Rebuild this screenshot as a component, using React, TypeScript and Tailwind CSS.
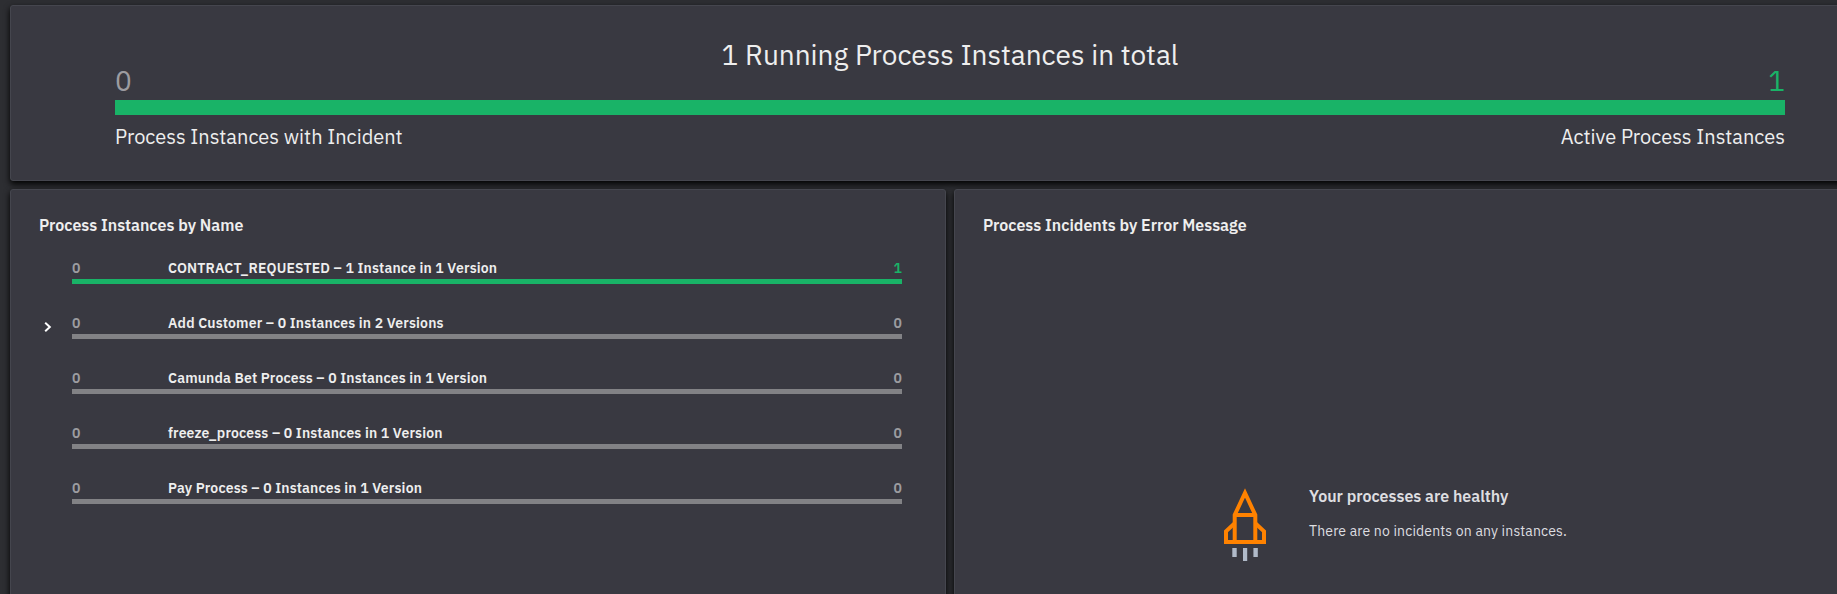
type Row = { name: string; incidents: number; active: number; expandable?: boolean };

const rows: Row[] = [
  { name: "CONTRACT_REQUESTED – 1 Instance in 1 Version", incidents: 0, active: 1 },
  { name: "Add Customer – 0 Instances in 2 Versions", incidents: 0, active: 0, expandable: true },
  { name: "Camunda Bet Process – 0 Instances in 1 Version", incidents: 0, active: 0 },
  { name: "freeze_process – 0 Instances in 1 Version", incidents: 0, active: 0 },
  { name: "Pay Process – 0 Instances in 1 Version", incidents: 0, active: 0 },
];

const card = "rounded-[3px] border border-[#45464e] bg-[#393941] shadow-[0_3px_6px_0_#000]";

function Summary() {
  return (
    <section className={`${card} h-[176px] shrink-0 px-[104px] pt-[31px]`}>
      <div className="flex h-[63px] items-start justify-between text-[28px] leading-9">
        <span className="mt-[26px] w-20 text-[#9c9ca0]">0</span>
        <h1>1 Running Process Instances in total</h1>
        <span className="mt-[26px] w-20 text-right text-[#19b367]">1</span>
      </div>
      <div className="h-[15px] bg-[#19b367]" />
      <div className="mt-2 flex justify-between text-xl leading-7">
        <span>Process Instances with Incident</span>
        <span>Active Process Instances</span>
      </div>
    </section>
  );
}

function InstanceRow({ row }: { row: Row }) {
  return (
    <li className="flex h-[55px]">
      <div className="w-[33px] pt-1.5 pl-px">
        {row.expandable && (
          <svg width="16" height="16" viewBox="0 0 16 16" fill="none" className="text-white">
            <path d="M5.2 3.8 L9.8 8 L5.2 12.2" stroke="currentColor" strokeWidth="2" />
          </svg>
        )}
      </div>
      <div className="flex-1">
        <div className="flex text-sm leading-5 font-semibold tracking-[0.16px]">
          <span className="w-24 text-[#9c9ca0]">{row.incidents}</span>
          <span className="flex-1">{row.name}</span>
          <span className={row.active > 0 ? "text-[#19b367]" : "text-[#9c9ca0]"}>{row.active}</span>
        </div>
        <div className={`mt-px h-[5px] ${row.active > 0 ? "bg-[#19b367]" : "bg-[#828285]"}`} />
      </div>
    </li>
  );
}

function Rocket() {
  return (
    <svg width="42" height="73" viewBox="0 0 42 73" fill="none" className="mt-1">
      <g stroke="#ff8200" strokeWidth="4">
        <path d="M10.7 54 V27 L21 5 L31.3 27 V54" />
        <path d="M10.7 27 H31.3" />
        <path d="M10.7 35.2 L2 43.3 V54 H40 V43.3 L31.3 35.2" />
      </g>
      <g fill="#b0bac9">
        <rect x="8.3" y="60" width="4.4" height="9" />
        <rect x="19" y="60" width="4.2" height="13" />
        <rect x="29.4" y="60" width="4.4" height="9" />
      </g>
    </svg>
  );
}

export default function App() {
  return (
    <div className="h-[594px] w-full overflow-hidden bg-[#2d2e32] font-['IBM_Plex_Sans',Roboto,sans-serif] text-[#eeeeee]">
      <main className="flex h-[640px] w-[1900px] flex-col gap-2 px-2.5 pt-[5px]">
        <Summary />
        <div className="grid flex-1 grid-cols-2 gap-2">
          <section className={`${card} pt-[23px] pr-[43px] pl-7`}>
            <h2 className="text-base leading-6 font-semibold">Process Instances by Name</h2>
            <ul className="mt-[21px]">
              {rows.map((row) => (
                <InstanceRow key={row.name} row={row} />
              ))}
            </ul>
          </section>
          <section className={`${card} pt-[23px] pl-7`}>
            <h2 className="text-base leading-6 font-semibold">Process Incidents by Error Message</h2>
            <div className="mt-[247px] ml-[241px] flex gap-[43px] text-[#dedee0]">
              <Rocket />
              <div>
                <h3 className="text-base leading-6 font-semibold">Your processes are healthy</h3>
                <p className="mt-[13px] text-sm leading-5 tracking-[0.16px]">There are no incidents on any instances.</p>
              </div>
            </div>
          </section>
        </div>
      </main>
    </div>
  );
}
